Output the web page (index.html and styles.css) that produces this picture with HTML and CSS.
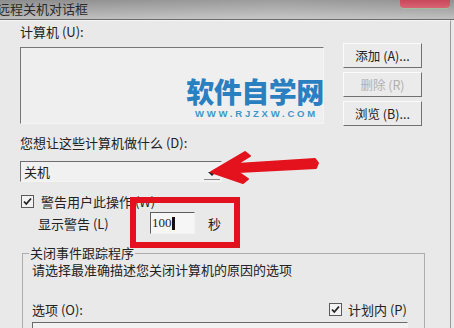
FILE: index.html
```html
<!DOCTYPE html>
<html lang="zh">
<head>
<meta charset="utf-8">
<link rel="stylesheet" href="styles.css">
</head>
<body>
<div class="titlebar">
  <span class="title">远程关机对话框</span>
  <span class="close"></span>
</div>
<div class="frame">
  <div class="label l1">计算机 (U):</div>
  <div class="row1">
    <div class="list">
      <div class="wm">
        <div class="wm-cn">软件自学网</div>
        <div class="wm-en">WWW.RJZXW.COM</div>
      </div>
    </div>
    <div class="buttons">
      <div class="btn">添加 (A)...</div>
      <div class="btn disabled">删除 (R)</div>
      <div class="btn">浏览 (B)...</div>
    </div>
  </div>
  <div class="label l2">您想让这些计算机做什么 (D):</div>
  <div class="combo">
    <span class="combo-text">关机</span>
    <span class="combo-btn"><span class="tri"></span></span>
  </div>
  <div class="chk-row">
    <span class="chk"><svg viewBox="0 0 11 11" width="11" height="11"><path d="M2 5.5 L4.3 8 L9 2.5" fill="none" stroke="#222" stroke-width="1.8"/></svg></span>
    <span>警告用户此操作 (W)</span>
  </div>
  <div class="warn-row">
    <span class="warn-label">显示警告 (L)</span>
    <span class="num-input"><span class="num">100</span><span class="caret"></span></span>
    <span class="sec">秒</span>
  </div>
  <fieldset class="group">
    <legend>关闭事件跟踪程序</legend>
    <div class="p1">请选择最准确描述您关闭计算机的原因的选项</div>
    <div class="opt-row">
      <span class="opt-label">选项 (O):</span>
      <span class="plan">
        <span class="chk"><svg viewBox="0 0 11 11" width="11" height="11"><path d="M2 5.5 L4.3 8 L9 2.5" fill="none" stroke="#222" stroke-width="1.8"/></svg></span>
        <span>计划内 (P)</span>
      </span>
    </div>
    <div class="combo2"></div>
  </fieldset>
</div>
<div class="redbox"></div>
<svg class="arrow" width="454" height="328" viewBox="0 0 454 328">
  <polygon points="211,172 245,152 250,156 237,164 315,159 318,163 316,168 238,172 248,179 243,183" fill="#e3121c" stroke="#e3121c" stroke-width="2" stroke-linejoin="round"/>
</svg>
</body>
</html>
```
FILE: styles.css
```css
html, body {
  margin: 0;
  padding: 0;
}
body {
  width: 454px;
  height: 328px;
  overflow: hidden;
  position: relative;
  background: #e9e9e9;
  font-family: "Noto Sans CJK SC", "Liberation Sans", sans-serif;
  font-size: 13px;
  line-height: 15px;
  color: #222;
}
.titlebar {
  height: 19px;
  border-bottom: 1px solid #6a6a6a;
  background: linear-gradient(to right, rgba(255,255,255,0) 0%, rgba(255,255,255,0.15) 60%, rgba(255,255,255,0.05) 100%),
              linear-gradient(to bottom, #8c8c8c 0%, #a9a9a9 60%, #bdbdbd 100%);
  display: flex;
  align-items: flex-start;
  overflow: hidden;
}
.title {
  margin-left: -3px;
  margin-top: 1px;
  color: #2a2a2a;
  white-space: nowrap;
}
.close {
  margin-left: auto;
  margin-right: 4px;
  width: 50px;
  height: 8px;
  background: linear-gradient(to bottom, #c9485a, #d86474);
  border-radius: 0 0 4px 4px;
  border-bottom: 1px solid #9fc0a0;
}
.frame {
  border-top: 1px solid #f6f6f6;
  border-right: 1px solid #9a9a9a;
  margin-right: 3px;
  height: 307px;
  padding-left: 20px;
  overflow: hidden;
}
.l1 {
  margin-top: 3px;
}
.row1 {
  display: flex;
  margin-top: 4px;
}
.list {
  width: 302px;
  height: 75px;
  margin-top: 4px;
  border: 1px solid;
  border-color: #767676 #f4f4f4 #f4f4f4 #767676;
  background: #efefef;
  position: relative;
}
.wm {
  position: absolute;
  left: 164px;
  top: 29px;
  width: 140px;
  text-align: center;
}
.wm-cn {
  font-size: 28px;
  line-height: 28px;
  font-weight: 900;
  color: #2a7fc0;
  letter-spacing: -0.5px;
  white-space: nowrap;
}
.wm-en {
  font-family: "Liberation Sans", sans-serif;
  font-size: 9.5px;
  line-height: 9px;
  font-weight: bold;
  color: #3c98c6;
  letter-spacing: 2.8px;
  margin-top: 4px;
  margin-left: 3px;
  white-space: nowrap;
}
.buttons {
  margin-left: 19px;
  display: flex;
  flex-direction: column;
  gap: 4px;
}
.btn {
  width: 79px;
  height: 25px;
  box-sizing: border-box;
  border: 1px solid;
  border-color: #fbfbfb #707070 #707070 #fbfbfb;
  background: #ebebeb;
  display: flex;
  align-items: center;
  justify-content: center;
  white-space: nowrap;
  font-size: 12.5px;
}
.btn.disabled {
  color: #b0b0b0;
}
.l2 {
  margin-top: 9px;
}
.combo {
  margin-top: 11px;
  width: 202px;
  height: 21px;
  box-sizing: border-box;
  border: 1px solid;
  border-color: #6e6e6e #f4f4f4 #f4f4f4 #6e6e6e;
  background: #f1f1f1;
  display: flex;
  align-items: center;
}
.combo-text {
  margin-left: 3px;
}
.combo-btn {
  margin-left: auto;
  width: 16px;
  height: 17px;
  margin-right: 1px;
  display: flex;
  align-items: flex-end;
  justify-content: center;
  box-sizing: border-box;
  border-bottom: 1px solid #8a8a8a;
}
.tri {
  width: 0;
  height: 0;
  border-left: 4px solid transparent;
  border-right: 4px solid transparent;
  border-top: 4px solid #222;
  margin-bottom: 3px;
}
.chk-row {
  margin-top: 12px;
  display: flex;
  align-items: center;
  height: 15px;
  gap: 7px;
}
.chk {
  width: 11px;
  height: 11px;
  border: 1px solid #5a5a5a;
  background: #f3f3f3;
  display: inline-flex;
  margin-left: 1px;
}
.chk svg {
  display: block;
}
.warn-row {
  margin-top: 3px;
  height: 22px;
  display: flex;
  align-items: center;
  padding-left: 18px;
}
.warn-label {
  width: 112px;
  white-space: nowrap;
}
.num-input {
  width: 45px;
  height: 22px;
  box-sizing: border-box;
  border: 1px solid;
  border-color: #5e5e5e #f3f3f3 #f3f3f3 #5e5e5e;
  background: #f6f6f6;
  display: flex;
  align-items: center;
  padding-left: 1px;
}
.num {
  font-family: "Liberation Serif", serif;
  font-size: 13px;
  line-height: 14px;
}
.caret {
  width: 3px;
  height: 13px;
  background: #111;
}
.sec {
  margin-left: 13px;
}
.group {
  margin: 12px 0 0 2px;
  width: 403px;
  box-sizing: border-box;
  border: 1px solid #adadad;
  padding: 0 0 0 6px;
  min-width: 0;
}
.group legend {
  padding: 0 1px;
  line-height: 14px;
}
.p1 {
  margin-left: 3px;
  margin-top: 2px;
}
.opt-row {
  margin-top: 25px;
  display: flex;
  align-items: center;
  height: 15px;
}
.opt-label {
  margin-left: 3px;
}
.plan {
  margin-left: auto;
  margin-right: 17px;
  display: flex;
  align-items: center;
  gap: 6px;
}
.combo2 {
  margin-top: 5px;
  margin-left: 3px;
  width: 376px;
  height: 22px;
  box-sizing: border-box;
  border: 1px solid;
  border-color: #6a6a6a #f3f3f3 #f3f3f3 #6a6a6a;
  background: #f1f1f1;
}
.redbox {
  position: absolute;
  left: 130px;
  top: 197px;
  width: 110px;
  height: 51px;
  box-sizing: border-box;
  border: 6px solid #e3111d;
}
.arrow {
  position: absolute;
  left: 0;
  top: 0;
  pointer-events: none;
}
```
